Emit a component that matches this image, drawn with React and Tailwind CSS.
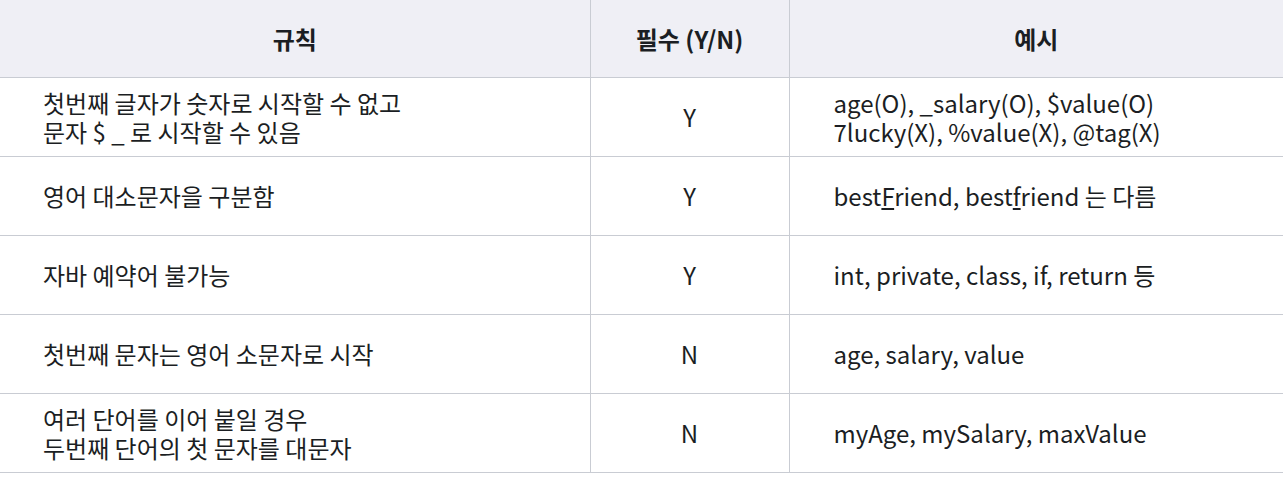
const rows = [
  {
    rule: ['첫번째 글자가 숫자로 시작할 수 없고', '문자 $ _ 로 시작할 수 있음'],
    req: 'Y',
    ex: ['age(O), _salary(O), $value(O)', '7lucky(X), %value(X), @tag(X)'],
  },
  { rule: ['영어 대소문자을 구분함'], req: 'Y', ex: null },
  { rule: ['자바 예약어 불가능'], req: 'Y', ex: ['int, private, class, if, return 등'] },
  { rule: ['첫번째 문자는 영어 소문자로 시작'], req: 'N', ex: ['age, salary, value'] },
  {
    rule: ['여러 단어를 이어 붙일 경우', '두번째 단어의 첫 문자를 대문자'],
    req: 'N',
    ex: ['myAge, mySalary, maxValue'],
  },
];

function Lines({ lines }) {
  return lines.map((l, i) => <div key={i}>{l}</div>);
}

export default function App() {
  return (
    <div className="w-[1283px] h-[479px] bg-white text-[#1b1e23] font-['Noto_Sans_CJK_KR','Noto_Sans',sans-serif] text-[24px] leading-[29px]">
      <table className="w-[1283px] border-collapse table-fixed">
        <colgroup>
          <col className="w-[590px]" />
          <col className="w-[199px]" />
          <col />
        </colgroup>
        <thead>
          <tr className="h-[77px] bg-[#efeff5]">
            <th className="font-bold text-center border-r border-[#c9ccd3]">규칙</th>
            <th className="font-bold text-center border-r border-[#c9ccd3]">필수 (Y/N)</th>
            <th className="font-bold text-center">예시</th>
          </tr>
        </thead>
        <tbody>
          {rows.map((r, i) => (
            <tr key={i} className="h-[79px] border-t border-[#c9ccd3] last:border-b">
              <td className="pl-[43px] pr-4 border-r border-[#c9ccd3] align-middle">
                <Lines lines={r.rule} />
              </td>
              <td className="text-center border-r border-[#c9ccd3] align-middle">{r.req}</td>
              <td className="pl-[44px] pr-4 align-middle">
                {r.ex ? (
                  <Lines lines={r.ex} />
                ) : (
                  <div>
                    best<span className="underline underline-offset-2">F</span>riend, best
                    <span className="underline underline-offset-2">f</span>riend 는 다름
                  </div>
                )}
              </td>
            </tr>
          ))}
        </tbody>
      </table>
    </div>
  );
}
